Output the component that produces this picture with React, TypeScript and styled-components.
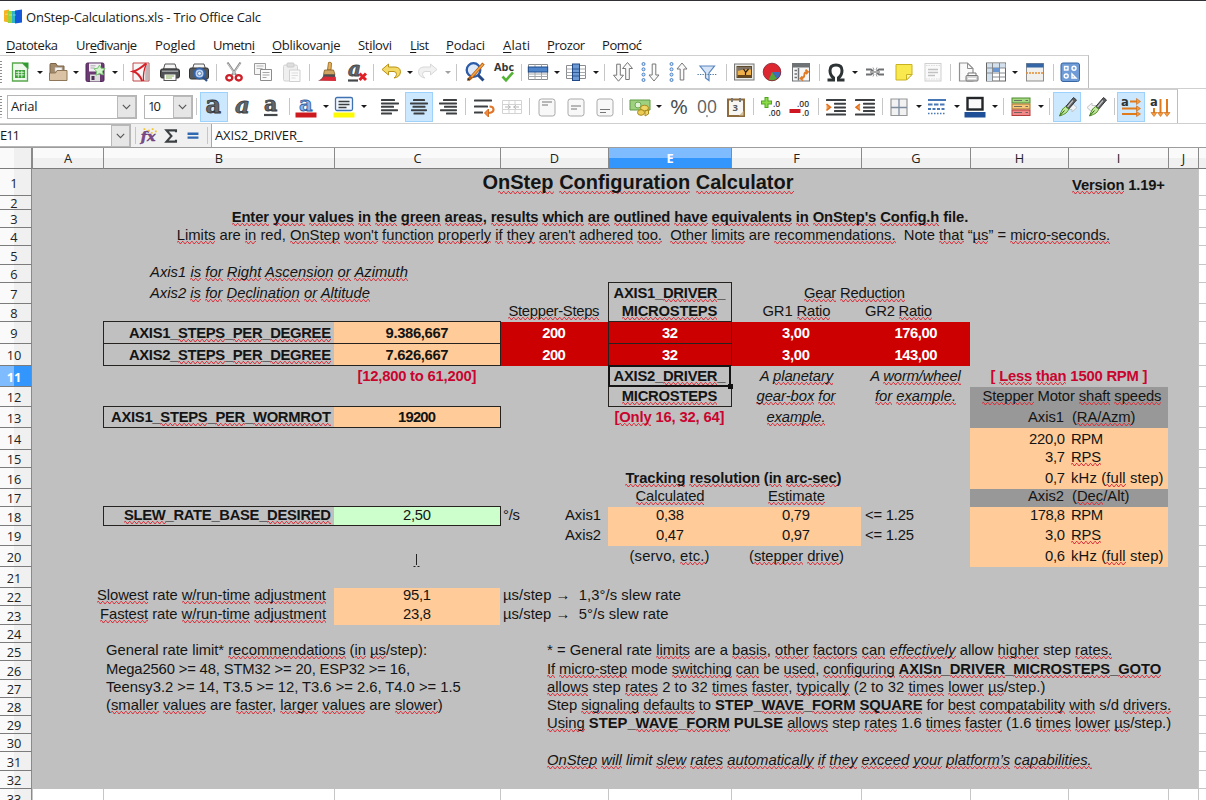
import React from "react";
import styled, { createGlobalStyle, css } from "styled-components";

const UI = '"Open Sans", "Noto Sans", sans-serif';
const CELL = '"Liberation Sans", Arial, sans-serif';

const GlobalStyle = createGlobalStyle`
  * { box-sizing: border-box; }
  html, body { margin: 0; padding: 0; background: #fff; }
  body { width: 1206px; height: 800px; overflow: hidden; }
`;

type Run = { text: string; bold?: boolean; italic?: boolean; wavy?: boolean };

const parse = (source: string, bold: boolean, italic: boolean): Run[] => {
  const runs: Run[] = [];
  let b = bold;
  let i = italic;
  let wavy = false;
  source.split(/(\*\*|\/\/|\{|\})/).forEach((part) => {
    if (part === "**") b = !b;
    else if (part === "//") i = !i;
    else if (part === "{") wavy = true;
    else if (part === "}") wavy = false;
    else if (part) runs.push({ text: part, bold: b, italic: i, wavy });
  });
  return runs;
};

const ruler = document.createElement("canvas").getContext("2d")!;

const spacingFor = (runs: Run[], size: number, family: string, width: number) => {
  let total = 0;
  let count = 0;
  runs.forEach((r) => {
    ruler.font = `${r.italic ? "italic " : ""}${r.bold ? "bold " : ""}${size}px ${family}`;
    total += ruler.measureText(r.text).width;
    count += r.text.length;
  });
  return (width - total) / Math.max(1, count - 1);
};

const Line = styled.span<{ $size: number; $family: string; $spacing: number }>`
  flex: none;
  white-space: pre;
  font-family: ${(p) => p.$family};
  font-size: ${(p) => p.$size}px;
  line-height: 1.15;
  letter-spacing: ${(p) => p.$spacing.toFixed(3)}px;
  margin-right: ${(p) => (-p.$spacing).toFixed(3)}px;
`;

const Piece = styled.span<{ $bold?: boolean; $italic?: boolean; $wavy?: boolean }>`
  font-weight: ${(p) => (p.$bold ? 700 : 400)};
  font-style: ${(p) => (p.$italic ? "italic" : "normal")};
  ${(p) =>
    p.$wavy &&
    css`
      padding-bottom: 1px;
      background-image: linear-gradient(45deg, transparent 40%, #dc2f3a 42%, #dc2f3a 60%, transparent 62%),
        linear-gradient(-45deg, transparent 40%, #dc2f3a 42%, #dc2f3a 60%, transparent 62%);
      background-position: 0 100%, 2.3px 100%;
      background-repeat: repeat-x;
      background-size: 4.6px 3px;
    `}
`;

const Underlined = styled.span`
  text-decoration: underline;
  text-underline-offset: 2px;
  text-decoration-thickness: 1px;
`;

type FitProps = { text: string; width: number; size?: number; family?: string; bold?: boolean; italic?: boolean };

const Fit = ({ text, width, size = 14.8, family = CELL, bold = false, italic = false }: FitProps) => {
  const runs = parse(text, bold, italic);
  return (
    <Line $size={size} $family={family} $spacing={spacingFor(runs, size, family, width)}>
      {runs.map((r, n) => (
        <Piece key={n} $bold={r.bold} $italic={r.italic} $wavy={r.wavy}>
          {r.text}
        </Piece>
      ))}
    </Line>
  );
};

/* ---------- window chrome ---------- */

const Window = styled.div`
  width: 1206px;
  height: 800px;
  overflow: hidden;
  display: flex;
  flex-direction: column;
  background: #fff;
  color: #1a1a1a;
  border-top: 1px solid #303036;
`;

const TitleBar = styled.header`
  height: 33px;
  flex: none;
  display: flex;
  align-items: center;
  gap: 4px;
  padding: 0 0 1px 4px;
`;

const MenuBar = styled.nav`
  height: 21px;
  flex: none;
  display: flex;
  align-items: center;
  padding: 1px 0 0 6px;
`;

const MenuItem = styled.span<{ $gap: number }>`
  margin-left: ${(p) => p.$gap}px;
  font-family: ${UI};
  display: flex;
`;

const Toolbar = styled.div<{ $height: number; $width: number }>`
  flex: none;
  height: ${(p) => p.$height}px;
  width: ${(p) => p.$width}px;
  display: flex;
  align-items: center;
  border-top: 1px solid #cfcfcf;
  border-right: 1px solid #bdbdbd;
`;

const ToolbarRow = styled.div`
  flex: none;
  display: flex;
  border-bottom: 1px solid #cfcfcf;
  width: 100%;
`;

const Grip = styled.span`
  flex: none;
  width: 3px;
  height: 22px;
  background: repeating-linear-gradient(#8f8f8f 0 1px, transparent 1px 3px);
  clip-path: inset(0 1px 0 0);
`;

const Separator = styled.span<{ $gap: number }>`
  flex: none;
  width: 1px;
  height: 17px;
  margin-left: ${(p) => p.$gap}px;
  background: #c6c6c6;
`;

const ToolButton = styled.span<{ $gap: number; $width: number; $active?: boolean }>`
  flex: none;
  margin-left: ${(p) => p.$gap}px;
  width: ${(p) => p.$width}px;
  height: 30px;
  display: flex;
  align-items: center;
  justify-content: center;
  ${(p) =>
    p.$active &&
    css`
      background: #cce8ff;
      border: 1px solid #9fd2fb;
    `}
`;

const DropMark = styled.span<{ $gap: number; $faded?: boolean }>`
  flex: none;
  margin-left: ${(p) => p.$gap}px;
  border: 3px solid transparent;
  border-top: 3.5px solid ${(p) => (p.$faded ? "#a0a0a0" : "#1a1a1a")};
  border-bottom: 0;
`;

const Combo = styled.span<{ $width: number; $gap: number }>`
  flex: none;
  width: ${(p) => p.$width}px;
  height: 24px;
  margin-left: ${(p) => p.$gap}px;
  display: flex;
  align-items: center;
  justify-content: space-between;
  padding-left: 3px;
  background: #fff;
  border: 1px solid #b5b5b5;
`;

const ComboButton = styled.span`
  width: 19px;
  height: 22px;
  flex: none;
  display: flex;
  align-items: center;
  justify-content: center;
  background: #e6e6e6;
  border: 1px solid #b9b9b9;
`;

const Chevron = () => (
  <ComboButton>
    <svg width="9" height="6" viewBox="0 0 9 6">
      <path d="M.8 .8 4.5 4.6 8.2 .8" fill="none" stroke="#555" strokeWidth="1.1" />
    </svg>
  </ComboButton>
);

/* ---------- icons, all drawn on a 22 unit square ---------- */

const bars = (rows: number[][], color = "#3c4043") =>
  rows.map(([x, y, w]) => <rect key={y} x={x} y={y} width={w} height="2" rx=".6" fill={color} />);

const pageBox = (y: number) => (
  <>
    <rect x="3" y="3" width="16" height="17" rx="2.4" fill="#f8f8f8" stroke="#a9a9a9" />
    <path d={`M6 ${y}h10M6 ${y + 3}h6`} stroke="#777" strokeWidth="1.1" />
  </>
);

const letter = (x: number, y: number, size: number, fill: string, stroke: string, style = "normal") => (
  <text x={x} y={y} fontFamily="DejaVu Serif, serif" fontStyle={style} fontWeight="700" fontSize={size} fill={fill} stroke={stroke} strokeWidth=".8">
    a
  </text>
);

const hollowArrow = "M-1.8 -8v11h-3.2l5 6 5-6h-3.2v-11z";

const pen = (
  <>
    <path d="M17.500 1.500 9.800 10.500l3 2.500L20.500 4z" fill="#5a5e61" stroke="#2b2b2b" strokeWidth=".9" />
    <path d="m17 4.500-5.500 6.500" stroke="#c4c4c4" strokeWidth="1.200" />
    <path d="M9.600 10.600C6.500 12 5.200 15.500 3.500 20c4-1.500 7.500-2.500 9.200-6.800z" fill="#c0e89b" stroke="#4f8f22" />
    <path d="m4 19.500 4.500-5" stroke="#2f5c12" />
  </>
);

const icons: Record<string, React.ReactNode> = {
  newSheet: (
    <>
      <path d="M3.500 2h10l5 5v13h-15z" fill="#eef8ec" stroke="#5aa84f" strokeWidth="1.300" />
      <path d="M13 1.500h6.500V8z" fill="#2f9a33" />
      <rect x="6" y="9" width="10" height="8" fill="#3fa33b" />
      <path d="M6.800 11.300h8.400M6.800 13.800h8.400M9.300 9.700v6.800M12.800 9.700v6.800" stroke="#e3f6df" strokeWidth=".9" />
    </>
  ),
  open: (
    <>
      <path d="M3 19V3.500Q3 2.500 4 2.500h5l1.500 2.500H17v5" fill="#a38a6b" stroke="#7a6348" />
      <path d="M8 6.500h7v4H8z" fill="#f6f6f6" stroke="#bbb" strokeWidth=".7" />
      <path d="M2.500 19.500V12h6l1.500-2.500H20v10z" fill="#d9c3a4" stroke="#8f7656" />
    </>
  ),
  save: (
    <>
      <rect x="2" y="2" width="18" height="18.500" rx="1.500" fill="#6b3a73" stroke="#4d2556" />
      <rect x="5" y="2.500" width="12" height="8" fill="#f2eef3" />
      <path d="M6.500 4.800h5M6.500 7h4" stroke="#aaa" />
      <rect x="6" y="13.500" width="10" height="7" fill="#ddd" />
      <rect x="7.500" y="15" width="3" height="4" fill="#51305a" />
      <path d="m15.500 4 1.600 3.200 3.900.3-2.600 2.800 1 3.700-3.900-1.600-3.400 1.800.6-3.900-2.800-2.500 3.900-.6z" fill="#d5f4cd" stroke="#6fc06a" strokeWidth=".9" />
    </>
  ),
  pdf: (
    <>
      <path d="M3 2h16v18H3z" fill="#f6f6f6" stroke="#c04848" />
      <path d="M18.500 2v17.500h-3.300V6z" fill="#b9b9b9" />
      <path d="M16 2.500C11 7 8 9 3.200 10.500c4 1 7 4.500 9 9.500" fill="none" stroke="#d5222a" strokeWidth="2" />
      <path d="M16.500 2.500C14 8 13 14 13.500 20" fill="none" stroke="#d5222a" strokeWidth="1.300" />
    </>
  ),
  print: (
    <>
      <path d="M6 3h10l1.500 5h-13z" fill="#f4f4f4" stroke="#555" />
      <rect x="1.500" y="8" width="19" height="9" rx="1.800" fill="#4d5052" stroke="#333" />
      <rect x="3" y="9.500" width="16" height="1.500" fill="#9a9da0" />
      <rect x="5" y="13" width="12" height="6.500" fill="#fbfbfb" stroke="#555" />
      <path d="M7 15h8M7 17h6" stroke="#8eb35e" />
    </>
  ),
  preview: (
    <>
      <path d="M6 3h10l1.500 5h-13z" fill="#f4f4f4" stroke="#555" />
      <rect x="1.500" y="7" width="19" height="11" rx="1.800" fill="#55585b" stroke="#333" />
      <circle cx="11.500" cy="12.500" r="5" fill="#bcd0ec" stroke="#3264ad" strokeWidth="2" />
      <circle cx="11.500" cy="12.500" r="2" fill="#e6eefa" stroke="#5e86c2" />
      <path d="m15 16 4 4" stroke="#2d4f8a" strokeWidth="2.200" />
    </>
  ),
  cut: (
    <>
      <path d="M4.500 1.500 13 14M17.500 1.500 9 14" stroke="#8b8b8b" strokeWidth="2.200" />
      <path d="M4.800 2.500 12 13M17.200 2.500 10 13" stroke="#e0e0e0" strokeWidth=".8" />
      <ellipse cx="6.300" cy="16.800" rx="3" ry="2.700" stroke="#cc2128" strokeWidth="2.400" />
      <ellipse cx="15.700" cy="16.800" rx="3" ry="2.700" stroke="#cc2128" strokeWidth="2.400" />
    </>
  ),
  copy: (
    <>
      <path d="M2.500 2.500h11v11h-11z" fill="#f6f6f6" stroke="#9b9b9b" />
      <path d="M4.500 5h7M4.500 7.500h6" stroke="#b5b5b5" />
      <path d="M8.500 8.500h11v11h-11z" fill="#fbfbfb" stroke="#8b8b8b" />
      <path d="M10.500 11.500h7M10.500 14h7M10.500 16.500h4" stroke="#a5a5a5" />
    </>
  ),
  paste: (
    <>
      <rect x="2.500" y="4" width="14" height="16" rx="1.500" fill="#efefef" stroke="#d2d2d2" />
      <rect x="6" y="2" width="7" height="4" rx="1" fill="#ddd" stroke="#cacaca" />
      <path d="M8.500 9h10.500v11.500H8.500z" fill="#fafafa" stroke="#d0d0d0" />
      <path d="M10.500 12h6.500M10.500 14.500h6.500M10.500 17h4" stroke="#dcdcdc" />
    </>
  ),
  brush: (
    <>
      <path d="M12.500 1.500q1.700-.8 3 .5l-.5 7h-3.500z" fill="#e6b25c" stroke="#9a6b21" strokeWidth=".9" />
      <path d="M8.500 9h9l1.500 4.500H7.500z" fill="#cfa463" stroke="#86602a" strokeWidth=".8" />
      <path d="M7.500 13.500H19l.8 6H2c3-.8 4.800-2.500 5.500-6z" fill="#4b4f53" />
      <path d="M2 19.600c3-.6 4.500-2 5.600-4.200l12 .6.400 4z" fill="#dc2b38" />
    </>
  ),
  clear: (
    <>
      {letter(2, 15, 20, "#63676a", "#44484b", "italic")}
      <path d="M2 19.500h10" stroke="#44484b" strokeWidth="2.200" />
      <path d="m13.500 12.500 6.500 6.500M20 12.500 13.500 19" stroke="#e02026" strokeWidth="3" />
    </>
  ),
  undo: (
    <path d="M8.500 3 2 8.500 8.500 14v-3.500h5.500q2.700.3 2.500 3-.2 2-2.500 3.500 6-.8 6.500-6.200-.3-4.600-5.500-4.800H8.500z" fill="#f3d968" stroke="#b99113" />
  ),
  redo: (
    <path d="M13.500 3 20 8.500 13.500 14v-3.500H8q-2.700.3-2.500 3 .2 2 2.500 3.500-6-.8-6.500-6.200.3-4.600 5.500-4.800h6.500z" fill="#f1f1f1" stroke="#d8d8d8" />
  ),
  find: (
    <>
      <circle cx="9.500" cy="9" r="6.800" fill="#dfe9f8" stroke="#2c5ba8" strokeWidth="2.300" />
      <path d="m14 14 5.500 5.500" stroke="#274a86" strokeWidth="3" />
      <path d="M19.500 2.500 7 16.500l-3 2.500" stroke="#b85f12" strokeWidth="3.300" />
      <path d="M19 3.200 7.500 15.800" stroke="#f4a545" strokeWidth="1.700" />
      <path d="m2.800 19.800 3-1-1.500-1.600z" fill="#222" />
    </>
  ),
  spell: (
    <>
      <text x="1" y="9.500" textLength="20" lengthAdjust="spacingAndGlyphs" fontFamily="Open Sans, sans-serif" fontWeight="700" fontSize="10.5" fill="#33373a">
        Abc
      </text>
      <path d="m9.500 15.500 3.500 3.800 7-8" stroke="#54b435" strokeWidth="2.600" />
    </>
  ),
  rows: (
    <>
      <path d="M1.500 3.500h19v15h-19z" fill="#fff" stroke="#8a8d90" />
      <path d="M8 3.500v15M14.500 3.500v15M1.500 15.500h19" stroke="#a5a8ab" />
      <rect x="1.300" y="6" width="19.400" height="5" fill="#4f86cb" stroke="#204a87" />
      <path d="M1.500 13h19" stroke="#a5a8ab" />
    </>
  ),
  cols: (
    <>
      <path d="M1.500 4.500h19v13h-19z" fill="#fff" stroke="#8a8d90" />
      <path d="M1.500 8h19M1.500 11.500h19M1.500 14.500h19" stroke="#a5a8ab" />
      <rect x="7.500" y="3" width="7" height="16.500" fill="#6c9ad4" stroke="#204a87" />
      <path d="M7.500 8h7M7.500 11.500h7M7.500 15h7" stroke="#204a87" strokeWidth=".8" />
    </>
  ),
  sort: (
    <>
      <path d={hollowArrow} transform="translate(6.500 11.200)" fill="#fafafa" stroke="#777" />
      <path d={hollowArrow} transform="translate(15.500 10.500) rotate(180)" fill="#fafafa" stroke="#777" />
    </>
  ),
  sortDown: (
    <>
      {[3, 8.300, 13.600, 19].map((y) => (
        <circle key={y} cx="3.500" cy={y} r="1.500" fill="#d8e6f8" stroke="#3d75bd" strokeWidth=".9" />
      ))}
      <path d={hollowArrow} transform="translate(14 11)" fill="#fafafa" stroke="#777" />
    </>
  ),
  sortUp: (
    <>
      {[3, 8.300, 13.600, 19].map((y) => (
        <circle key={y} cx="3.500" cy={y} r="1.500" fill="#d8e6f8" stroke="#3d75bd" strokeWidth=".9" />
      ))}
      <path d={hollowArrow} transform="translate(14 11) rotate(180)" fill="#fafafa" stroke="#777" />
    </>
  ),
  filter: (
    <>
      <path d="M4 5h14.500l-5.500 7v7.500l-3.500-2.500V12z" fill="#d5e5f7" stroke="#5a86bd" strokeWidth="1.200" />
      <path d="M1.500 13.500h19" stroke="#48759f" strokeDasharray="1.300 1.200" />
    </>
  ),
  image: (
    <>
      <rect x="1.500" y="3" width="19.500" height="16" fill="#e9e9e6" stroke="#777" />
      <rect x="4" y="5.500" width="14.500" height="11" fill="#f0b04a" stroke="#5e4a2a" />
      <path d="M4.500 6h13.500v2.500q-6-1-13.500 1.500z" fill="#7d7263" />
      <path d="M12.500 16v-5l-2-3M12.500 11.500l3-3.500" stroke="#2c1f10" strokeWidth="1.200" />
      <path d="M4.500 14h13.500v2H4.500z" fill="#6a4718" />
    </>
  ),
  chart: (
    <>
      <circle cx="11" cy="11" r="8.800" fill="#dd2731" />
      <path d="M11 11h8.800a8.800 8.800 0 0 1-3.800 7.200z" fill="#3e6fba" />
      <path d="m11 11 5.200 7.100a8.800 8.800 0 0 1-8.500 1z" fill="#57a639" />
      <circle cx="11" cy="11" r="8.800" stroke="#7d2030" strokeWidth=".8" />
    </>
  ),
  pivot: (
    <>
      <rect x="2.500" y="2.500" width="17" height="17.500" fill="#f6f6f6" stroke="#6f7275" />
      <path d="M3 3h16.500v3.500H3z" fill="#6f7275" />
      <path d="M4.500 9.500h2.500M4.500 13h2.500M4.500 16.500h2.500M8.500 7v12.500" stroke="#6f7275" strokeWidth="1.500" />
      <path d="M10.500 17.500q4-.3 3.800-3.700 0-2.800 3-3M12.500 15.500l-2 2 2.500 2M15.500 8.800l2.500 2-2 2.300" stroke="#e07a25" strokeWidth="1.800" />
    </>
  ),
  omega: (
    <path d="M2.500 19h6v-2.300C5.800 14.900 5 12.500 5 9.500 5 6 7 4 11 4s6 2 6 5.500c0 3-.8 5.400-3.500 7.200V19h6" stroke="#2e3436" strokeWidth="3" />
  ),
  link: (
    <>
      <path d="M2 8.500h5l3 2.500-3 2.500H2M20 8.500h-5L12 11l3 2.500h5" stroke="#6e7174" strokeWidth="1.800" />
      <path d="M6 11h10" stroke="#aaa" strokeWidth="2" />
      <path d="M9 6.500l1 2.500M13 6.500l-1 2.500M9 15.500l1-2.500M13 15.500l-1-2.500" stroke="#999" />
    </>
  ),
  note: (
    <>
      <path d="M3 3.500h16v10l-5.500 5.500H3z" fill="#f9e94e" stroke="#c9b21f" />
      <path d="M13.500 19v-5.500H19z" fill="#fdf7ae" stroke="#c9b21f" />
    </>
  ),
  page: (
    <>
      <rect x="3" y="2.500" width="16" height="17.500" fill="#fafafa" stroke="#cfcfcf" />
      <path d="M4 4.500h14M4 18h14" stroke="#dcdcdc" strokeDasharray="1.500 1" />
      <path d="M6 8.500h10M6 11.500h10M6 14.500h7" stroke="#c2c2c2" strokeWidth="1.400" />
    </>
  ),
  printArea: (
    <>
      <path d="M2.500 2h8l5.500 5.500V20H2.500z" fill="#fafafa" stroke="#8f8f8f" strokeWidth="1.200" />
      <path d="M10.500 2v5.500H16" stroke="#8f8f8f" />
      <path d="M11 12h8v3h-8z" fill="#fff" stroke="#777" />
      <rect x="9" y="14.500" width="12" height="5.500" rx="1" fill="#d3d3d3" stroke="#777" />
      <path d="M11 17.500h8" stroke="#fff" strokeWidth="1.300" />
    </>
  ),
  freeze: (
    <>
      <rect x="1.500" y="2" width="19" height="18" fill="#fff" stroke="#666" />
      <path d="M2 2.500h18.500V7H7.500v13H2z" fill="#d3e0ee" />
      <path d="M7.500 2v18M14.500 2v18M1.500 7h19M1.500 12h19M7.500 16h13" stroke="#7d8083" strokeWidth=".9" />
      <rect x="8" y="7" width="6" height="4" fill="#6796d2" />
    </>
  ),
  split: (
    <>
      <rect x="2.500" y="2.500" width="17" height="17.500" fill="#f0f0ee" stroke="#8d8d8d" />
      <rect x="2.500" y="2.500" width="17" height="4" fill="#3465a4" />
      <path d="M2 12h18" stroke="#e58a2d" strokeWidth="1.300" strokeDasharray="2 1" />
    </>
  ),
  draw: (
    <>
      <rect x="2" y="2" width="18.500" height="18.500" rx="2" fill="#6f9bd6" stroke="#3465a4" />
      <g fill="#7fa7de" stroke="#fff" strokeWidth="1.400">
        <rect x="5.500" y="5.500" width="3.500" height="3.500" />
        <circle cx="15" cy="7.300" r="2" />
        <circle cx="7.200" cy="15" r="2" />
        <path d="M13 13v4h4z" />
      </g>
    </>
  ),
  bold: <>{letter(2.500, 17, 24, "#63676a", "#2e3436")}</>,
  italic: <>{letter(3, 17, 23, "#63676a", "#3c4043", "italic")}</>,
  underline: (
    <>
      {letter(4, 15, 20.500, "#63676a", "#3c4043")}
      <path d="M4 19h13.500" stroke="#44484b" strokeWidth="2.200" />
    </>
  ),
  fontColor: (
    <>
      {letter(4, 14.500, 21, "#8db4e6", "#2b5c9e")}
      <rect x=".5" y="16.500" width="21" height="5" fill="#cc1a1f" />
    </>
  ),
  highlight: (
    <>
      <rect x="2.500" y="1.500" width="17" height="13" rx="1.500" fill="#f2f7fd" stroke="#3f72b3" strokeWidth="1.300" />
      <path d="M5.500 5.500h11M5.500 8.500h11M5.500 11.500h8" stroke="#3b3f42" strokeWidth="1.500" />
      <rect x=".5" y="16.500" width="21" height="5" fill="#fdfb04" />
    </>
  ),
  alignLeft: <>{bars([[2, 3, 14], [2, 6.400, 18], [2, 9.800, 13], [2, 13.200, 17], [2, 16.600, 11]])}</>,
  alignCenter: <>{bars([[5, 3, 12], [2, 6.400, 18], [4.500, 9.800, 13], [3, 13.200, 16], [5.500, 16.600, 11]])}</>,
  alignRight: <>{bars([[6, 3, 14], [2, 6.400, 18], [7, 9.800, 13], [3, 13.200, 17], [9, 16.600, 11]])}</>,
  wrap: (
    <>
      {bars([[1, 3.500, 18], [1, 9.500, 14], [1, 15.500, 9]])}
      <path d="M16.500 10.500q4 0 4 3.200 0 3-5.500 3.300" stroke="#e0752a" strokeWidth="2.200" />
      <path d="m15.500 13-4 4 4 4z" fill="#f08a3c" stroke="#d56a1c" />
    </>
  ),
  merge: (
    <>
      <path d="M1.500 4.500h19v13h-19zM1.500 8.500h19M1.500 13.500h19M8 4.500v4M14 4.500v4M8 13.500v4M14 13.500v4" stroke="#d3d3d3" />
      <path d="M4 11h5M18 11h-5M7 9.300 9.500 11 7 12.700M15 9.300 12.500 11l2.500 1.700" stroke="#b5b5b5" />
    </>
  ),
  alignTop: pageBox(6),
  alignMiddle: pageBox(10),
  alignBottom: pageBox(13.500),
  currency: (
    <>
      <path d="M1 4h20v10H1z" fill="#9fd07f" stroke="#5f9a45" />
      <circle cx="9" cy="9" r="3" fill="#e0f2d4" stroke="#6ba850" />
      <ellipse cx="15.500" cy="12" rx="4" ry="2.800" fill="#f0d567" stroke="#a98b1d" />
      <ellipse cx="12" cy="16.500" rx="3.500" ry="2.800" fill="#eccb52" stroke="#a98b1d" />
      <path d="M16 15v5l3.500-2v-4z" stroke="#a98b1d" fill="#f0d567" />
    </>
  ),
  percent: (
    <text x="2" y="17.500" fontFamily="Open Sans, sans-serif" fontSize="20" textLength="18" lengthAdjust="spacingAndGlyphs" fill="#4a4d50">
      %
    </text>
  ),
  number: (
    <>
      <text x="1" y="16.500" fontFamily="Open Sans, sans-serif" fontSize="19" textLength="20" lengthAdjust="spacingAndGlyphs" fill="#5e6164">
        00
      </text>
      <path d="M10 19.500h2l-1 2z" fill="#4a4d50" />
    </>
  ),
  date: (
    <>
      <path d="M3 3.500h16v16.500H3z" fill="#f7f6f2" stroke="#8e6b3d" strokeWidth="2" />
      <path d="M7 2v4M15 2v4" stroke="#777" strokeWidth="2" />
      <text x="7.500" y="15" fontFamily="Open Sans, sans-serif" fontWeight="700" fontSize="9.5" fill="#55585b">
        3
      </text>
      <path d="M14 19.500 18.500 15v4.500z" fill="#d6c39f" />
    </>
  ),
  addDecimal: (
    <>
      <path d="M6.500 1v11M1 6.500h11" stroke="#4ea51f" strokeWidth="4" />
      <path d="M6.500 2v9M2 6.500h9" stroke="#8bdb4b" strokeWidth="2" />
      <g fontFamily="Open Sans, sans-serif" fontWeight="600" fontSize="8.5" fill="#333">
        <text x="13" y="11">.0</text>
        <text x="8.500" y="20">.00</text>
      </g>
    </>
  ),
  removeDecimal: (
    <>
      <rect x=".5" y="13" width="11" height="4" fill="#cf1723" />
      <g fontFamily="Open Sans, sans-serif" fontWeight="600" fontSize="8.5" fill="#333">
        <text x="8" y="11">.00</text>
        <text x="13" y="20">.0</text>
      </g>
    </>
  ),
  indent: (
    <>
      {bars([[1, 3, 20], [9, 6.700, 12], [9, 10.400, 12], [9, 14.100, 12], [1, 17.500, 20]])}
      <path d="m1.500 8 4 3.200-4 3.300" fill="#f59a4e" stroke="#e0701d" strokeWidth="1.600" />
    </>
  ),
  outdent: (
    <>
      {bars([[1, 3, 20], [9, 6.700, 12], [9, 10.400, 12], [9, 14.100, 12], [1, 17.500, 20]])}
      <path d="M6 8l-4 3.200 4 3.300" fill="#f59a4e" stroke="#e0701d" strokeWidth="1.600" />
    </>
  ),
  borders: (
    <>
      <path d="M3 3h16v16.500H3z" fill="#f2f2f2" stroke="#979797" strokeWidth="1.200" />
      <path d="M11 3v16.500M3 11.500h16" stroke="#7e8ca0" strokeWidth="1.300" />
    </>
  ),
  lineStyle: (
    <>
      <path d="M2 4h18" stroke="#4877b5" strokeWidth="2" />
      <path d="M2 8.500h18" stroke="#4877b5" strokeWidth="2" strokeDasharray="4.500 1.500" />
      <path d="M2 13h18" stroke="#4877b5" strokeWidth="2" strokeDasharray="3 1.500" />
      <path d="M2 17.500h18" stroke="#4877b5" strokeWidth="1.700" strokeDasharray="1.500 1.500" />
    </>
  ),
  borderColor: (
    <>
      <rect x="3.500" y="2" width="15" height="11.500" fill="#fafafa" stroke="#222629" strokeWidth="2.400" />
      <rect x=".5" y="16" width="21" height="5.500" fill="#1f4f96" />
    </>
  ),
  conditional: (
    <>
      <rect x="2" y="2" width="18" height="5" fill="#a6da82" stroke="#4e8a32" />
      <rect x="2" y="8" width="18" height="5" fill="#f7c97c" stroke="#a8742a" />
      <rect x="2" y="14" width="18" height="5.500" fill="#f08a8a" stroke="#b53a3a" />
      <path d="M4 4.500h8M4 10.500h8M4 16.500h8M15.500 4.500h2.500M15.500 10.500h2.500M15.500 16.500h2.500" stroke="#555" strokeWidth=".8" />
    </>
  ),
  penRight: (
    <>
      <path d="M10 9.500h6V7l5 4.500-5 4.500v-2.500h-6z" fill="#f0f4f7" stroke="#bcc5cc" />
      {pen}
    </>
  ),
  penLeft: (
    <>
      <path d="M12 9.500H6V7l-5 4.500L6 16v-2.500h6z" fill="#f6f6f6" stroke="#c4c4c4" />
      {pen}
    </>
  ),
  textAcross: (
    <>
      <text x="1" y="9.500" fontFamily="DejaVu Sans, sans-serif" fontWeight="700" fontSize="11.5" fill="#2e3436">
        a
      </text>
      <path d="M10 5.500h8M2 12.500h16M2 18h16" stroke="#e07a1a" strokeWidth="2" />
      <path d="m16.500 2.500 4 3-4 3zM16.500 9.800l4 2.700-4 2.700zM16.500 15.500l4 2.500-4 2.500z" fill="#f39a3c" stroke="#c96512" strokeWidth=".6" />
    </>
  ),
  textDown: (
    <>
      <text x="1" y="9.500" fontFamily="DejaVu Sans, sans-serif" fontWeight="700" fontSize="11.5" fill="#2e3436">
        a
      </text>
      <path d="M5 12v6M11.500 3v15M18 3v15" stroke="#e07a1a" strokeWidth="2" />
      <path d="m2 16.500 3 4 3-4zM8.500 16.500l3 4 3-4zM15 16.500l3 4 3-4z" fill="#f39a3c" stroke="#c96512" strokeWidth=".6" />
    </>
  ),
  fx: (
    <>
      <text x="2" y="16.500" fontFamily="DejaVu Serif, serif" fontStyle="italic" fontWeight="700" fontSize="14.5" textLength="16" lengthAdjust="spacingAndGlyphs" fill="#7a4a86" stroke="#6a3a76" strokeWidth=".5">
        fx
      </text>
      <path d="M5 3.500h2M10 5h2M14 3.500h2M17.500 6h2M13 7.500h2" stroke="#f2c530" strokeWidth="2" />
    </>
  ),
  sigma: <path d="M16.500 7V4.800H6l5.500 6.200L6 17.200h10.500V15" stroke="#3c4043" strokeWidth="2.300" />,
  equals: <path d="M5 8.500h12M5 12.800h12" stroke="#2f67b0" strokeWidth="2.700" />,
};

const IconBox = styled.svg`
  overflow: visible;
`;

const Glyph = ({ name, size = 22 }: { name: string; size?: number }) => (
  <IconBox width={size} height={size} viewBox="0 0 22 22" fill="none">
    {icons[name]}
  </IconBox>
);

type Tool = [string, number, boolean?];

const standardTools: Tool[] = [
  ["newSheet", 6], ["drop", 5.5], ["open", 4], ["drop", 4.5], ["save", 5], ["drop", 5.5], ["|", 5],
  ["pdf", 6.5], ["print", 7], ["preview", 6.5], ["|", 6],
  ["cut", 6.5], ["copy", 6.5], ["paste", 7.5], ["|", 6],
  ["brush", 6], ["clear", 8], ["|", 4.5],
  ["undo", 6], ["drop", 5.5], ["redo", 4], ["drop", 6, true], ["|", 5],
  ["find", 7], ["spell", 6.5], ["|", 6],
  ["rows", 5.5], ["drop", 5], ["cols", 5], ["drop", 5.5], ["|", 5.5],
  ["sort", 6.5], ["sortDown", 6], ["sortUp", 6.5], ["filter", 6], ["|", 7.5],
  ["image", 6], ["chart", 6.5], ["pivot", 7], ["|", 6.5],
  ["omega", 5.5], ["drop", 5], ["link", 6], ["note", 6.5], ["page", 7], ["|", 6],
  ["printArea", 6.5], ["freeze", 6], ["drop", 5], ["split", 6], ["|", 6.5], ["draw", 5.5],
];

const formatTools: Tool[] = [
  ["|", 3], ["bold", 3, true], ["italic", 1], ["underline", 0], ["|", 4],
  ["fontColor", 2], ["drop", 2.5], ["highlight", 1.5], ["drop", 2.5],
  ["alignLeft", 9.5], ["alignCenter", 1, true], ["alignRight", 1], ["|", 3],
  ["wrap", 3.5], ["merge", 0.5], ["|", 3],
  ["alignTop", 3], ["alignMiddle", 1], ["alignBottom", 1], ["|", 3],
  ["currency", 2.5], ["drop", 2.5], ["percent", 3], ["number", 0], ["date", 1], ["|", 3],
  ["addDecimal", 3], ["removeDecimal", 1], ["|", 3.5],
  ["indent", 3.5], ["outdent", 1], ["|", 3],
  ["borders", 2], ["drop", 2.5], ["lineStyle", 1.5], ["drop", 3], ["borderColor", 1], ["drop", 3], ["|", 5],
  ["conditional", 3], ["drop", 2.5], ["|", 5],
  ["penRight", 3.5, true], ["penLeft", 1.5], ["|", 3],
  ["textAcross", 2.5, true], ["textDown", 1],
];

const Tools = ({ items, slot }: { items: Tool[]; slot: number }) => (
  <>
    {items.map(([name, gap, flag], n) => {
      if (name === "|") return <Separator key={n} $gap={gap} />;
      if (name === "drop") return <DropMark key={n} $gap={gap} $faded={flag} />;
      return (
        <ToolButton key={n} $gap={gap} $width={slot} $active={flag}>
          <Glyph name={name} />
        </ToolButton>
      );
    })}
  </>
);

const menu: [string, number, number, number][] = [
  ["Datoteka", 0, 52, 0], ["Uređivanje", 2, 61, 18], ["Pogled", 2, 40.5, 18], ["Umetni", 5, 42, 17.5],
  ["Oblikovanje", 0, 68.5, 17], ["Stilovi", 2, 34, 17.5], ["List", 0, 19, 18], ["Podaci", 0, 39, 17],
  ["Alati", 0, 27, 18], ["Prozor", 0, 38, 17], ["Pomoć", 2, 40, 17],
];

/* ---------- formula bar ---------- */

const FormulaBar = styled.div`
  flex: none;
  height: 24px;
  display: flex;
  align-items: center;
  background: #f0f0f0;
  border-bottom: 1px solid #9c9c9c;
`;

const NameBox = styled.div`
  width: 131px;
  height: 23px;
  display: flex;
  align-items: center;
  justify-content: space-between;
  background: #fff;
  border: 1px solid #b5b5b5;
  border-left: 0;
`;

const FormulaTools = styled.div`
  width: 80px;
  display: flex;
  align-items: center;
`;

const FormulaInput = styled.div`
  flex: 1;
  height: 23px;
  display: flex;
  align-items: center;
  padding-left: 3px;
  background: #fff;
  border-left: 1px solid #a8a8a8;
`;

/* ---------- sheet ---------- */

const columns: [string, number][] = [
  ["A", 71], ["B", 231], ["C", 166], ["D", 108], ["E", 123], ["F", 130],
  ["G", 109], ["H", 98], ["I", 100], ["J", 30], ["", 8],
];

const rowHeights = [
  27, 14, 18, 18, 19, 18, 21, 18, 22, 22, 21, 20, 21, 22, 18, 21, 18, 19, 20, 21, 21, 18, 19, 18, 18, 19, 18, 18,
  18, 18, 19, 18, 19,
];

const Sheet = styled.main`
  flex: none;
  display: grid;
  grid-template-columns: 32px ${columns.map((c) => `${c[1]}px`).join(" ")};
  grid-template-rows: 21px ${rowHeights.map((h) => `${h}px`).join(" ")};
`;

type Area = { $r: number; $c: number; $rows?: number; $cols?: number };

const area = css<Area>`
  grid-row: ${(p) => p.$r + 1} / span ${(p) => p.$rows ?? 1};
  grid-column: ${(p) => p.$c + 1} / span ${(p) => p.$cols ?? 1};
  min-width: 0;
  min-height: 0;
`;

const Header = styled.div<Area & { $selected?: boolean; $side?: boolean }>`
  ${area}
  display: flex;
  align-items: center;
  justify-content: center;
  padding-top: ${(p) => (p.$side ? 1 : 0)}px;
  padding-right: ${(p) => (p.$side ? 3 : 0)}px;
  font: ${(p) => (p.$selected ? 700 : 400)} 12.8px/12px ${UI};
  color: ${(p) => (p.$selected ? "#fff" : "#222")};
  border-${(p) => (p.$side ? "right" : "left")}: 1px solid #8a8a8a;
  border-bottom: 1px solid #7c7c7c;
  background: ${(p) =>
    p.$side
      ? p.$selected
        ? "linear-gradient(90deg, #7fbcff 0 14px, #3396fd 14px)"
        : "linear-gradient(90deg, #fafafa 0 14px, #f0f0f0 14px)"
      : p.$selected
        ? "linear-gradient(#7fbcff 0 50%, #3396fd 50%)"
        : "linear-gradient(#fafafa 0 50%, #f0f0f0 50%)"};
`;

const Fill = styled.div<Area & { $color: string }>`
  ${area}
  background: ${(p) => p.$color};
`;

const GridCell = styled.div<Area>`
  ${area}
  border-left: 1px solid #c6c6c6;
  border-bottom: 1px solid #c6c6c6;
`;

const Frame = styled.div<Area>`
  ${area}
  margin: -1px -1px 0 0;
  border: 1px solid #26221f;
`;

const Cursor = styled.div<Area>`
  ${area}
  position: relative;
  margin: -1px 0 0 0;
  border: 2px solid #141414;
  &::after {
    content: "";
    position: absolute;
    right: -4px;
    bottom: -4px;
    width: 5px;
    height: 5px;
    background: #111;
  }
`;

const Caret = styled.div<Area>`
  ${area}
  display: flex;
  align-items: center;
  justify-content: center;
  padding-top: 9px;
`;

const CellText = styled.div<Area & { $align: string; $color: string; $left: number; $right: number; $up: number }>`
  ${area}
  display: flex;
  align-items: flex-end;
  justify-content: ${(p) => p.$align};
  color: ${(p) => p.$color};
  padding: 0 ${(p) => p.$right}px ${(p) => p.$up}px ${(p) => p.$left}px;
`;

type Entry = {
  r: number;
  c: number;
  cols?: number;
  a?: "l" | "c" | "r";
  w: number;
  t: string;
  b?: boolean;
  i?: boolean;
  color?: string;
  left?: number;
  right?: number;
  size?: number;
  up?: number;
};

const LIMIT = "#c9052f";
const WHITE = "#ffffff";

const entries: Entry[] = [
  { r: 1, c: 2, cols: 8, left: 5, w: 311, t: "O{nStep} {Configuration} {Calculator}", b: true, size: 20, up: 2 },
  { r: 1, c: 9, a: "l", left: 4, w: 93, t: "{Version} 1.19+", b: true, up: 2 },
  { r: 3, c: 1, cols: 9, w: 736.5, b: true, t: "{Enter} {your} {values} {in} {the} {green} {areas}, {results} {which} {are} {outlined} {have} {equivalents} {in} {OnStep's} {Config.h} file." },
  { r: 4, c: 1, cols: 10, left: 57, w: 933, t: "{Limits} are {in} red, {OnStep} {won't} {function} {properly} {if} {they} {aren't} {adhered} {too.}  {Other} {limits} are {recommendations.}  Note {that} “{µs}” = {micro-seconds.}" },
  { r: 6, c: 2, a: "l", left: 47, w: 259, i: true, t: "Axis1 {is} {for} {Right} {Ascension} {or} {Azimuth}" },
  { r: 7, c: 2, a: "l", left: 47, w: 220.5, i: true, t: "Axis2 {is} {for} {Declination} {or} {Altitude}" },
  { r: 7, c: 5, w: 112, b: true, t: "AXIS1_{DRIVER}_" },
  { r: 8, c: 5, w: 95.5, b: true, t: "{MICROSTEPS}" },
  { r: 7, c: 6, cols: 2, left: 8, w: 101, t: "{Gear} {Reduction}" },
  { r: 8, c: 4, w: 91, t: "{Stepper-Steps}" },
  { r: 8, c: 6, left: 1, w: 68, t: "GR1 {Ratio}" },
  { r: 8, c: 7, a: "l", left: 4, w: 67, t: "GR2 {Ratio}" },
  { r: 9, c: 2, a: "r", right: 3, w: 202, b: true, t: "AXIS1_{STEPS}_{PER}_{DEGREE}" },
  { r: 10, c: 2, a: "r", right: 3, w: 202, b: true, t: "AXIS2_{STEPS}_{PER}_{DEGREE}" },
  { r: 9, c: 3, w: 63, b: true, t: "9.386,667" },
  { r: 10, c: 3, w: 63, b: true, t: "7.626,667" },
  ...[9, 10].flatMap((r): Entry[] => [
    { r, c: 4, w: 23.5, b: true, color: WHITE, t: "200" },
    { r, c: 5, left: 1, w: 16, b: true, color: WHITE, t: "32" },
    { r, c: 6, w: 28, b: true, color: WHITE, t: "3,00" },
    { r, c: 7, left: 1, w: 43, b: true, color: WHITE, t: r === 9 ? "176,00" : "143,00" },
  ]),
  { r: 11, c: 3, w: 119, b: true, color: LIMIT, t: "[12,800 to 61,200]" },
  { r: 11, c: 5, w: 112, b: true, t: "AXIS2_{DRIVER}_" },
  { r: 12, c: 5, w: 95.5, b: true, t: "{MICROSTEPS}" },
  { r: 13, c: 5, w: 110, b: true, color: LIMIT, t: "[{Only} 16, 32, 64]" },
  { r: 11, c: 6, left: 1, w: 74, i: true, t: "A {planetary}" },
  { r: 12, c: 6, w: 79, i: true, t: "{gear-box} {for}" },
  { r: 13, c: 6, w: 59, i: true, t: "{example.}" },
  { r: 11, c: 7, w: 91, i: true, t: "A {worm/wheel}" },
  { r: 12, c: 7, w: 81, i: true, t: "{for} {example.}" },
  { r: 11, c: 8, cols: 2, w: 157, b: true, color: LIMIT, t: "[ {Less} {than} 1500 RPM ]" },
  { r: 12, c: 8, cols: 2, left: 6, w: 179, t: "{Stepper} Motor {shaft} {speeds}" },
  { r: 13, c: 8, a: "r", right: 4, w: 36, t: "Axis1" },
  { r: 13, c: 9, a: "l", left: 4, w: 63.5, t: "({RA/Azm})" },
  { r: 13, c: 2, a: "r", right: 3, w: 220, b: true, t: "AXIS1_{STEPS}_{PER}_{WORMROT}" },
  { r: 13, c: 3, w: 38, b: true, t: "19200" },
  { r: 14, c: 8, a: "r", right: 3, w: 36, t: "220,0" },
  { r: 15, c: 8, a: "r", right: 3, w: 20, t: "3,7" },
  { r: 16, c: 8, a: "r", right: 3, w: 20, t: "0,7" },
  { r: 17, c: 8, a: "r", right: 4, w: 36, t: "Axis2" },
  { r: 18, c: 8, a: "r", right: 3, w: 35, t: "178,8" },
  { r: 19, c: 8, a: "r", right: 3, w: 20, t: "3,0" },
  { r: 20, c: 8, a: "r", right: 3, w: 20, t: "0,6" },
  { r: 14, c: 9, a: "l", left: 3, w: 32, t: "RPM" },
  { r: 15, c: 9, a: "l", left: 3, w: 30, t: "{RPS}" },
  { r: 16, c: 9, a: "l", left: 3, w: 92.5, t: "kHz ({full} step)" },
  { r: 17, c: 9, a: "l", left: 4, w: 57.5, t: "({Dec}/Alt)" },
  { r: 18, c: 9, a: "l", left: 3, w: 32, t: "RPM" },
  { r: 19, c: 9, a: "l", left: 3, w: 30, t: "{RPS}" },
  { r: 20, c: 9, a: "l", left: 3, w: 92.5, t: "kHz ({full} step)" },
  { r: 16, c: 5, cols: 2, w: 216, b: true, right: 2, t: "{Tracking} {resolution} ({in} {arc-sec})" },
  { r: 17, c: 5, left: 1, w: 69, t: "{Calculated}" },
  { r: 17, c: 6, left: 1, w: 57, t: "{Estimate}" },
  { r: 18, c: 2, a: "r", right: 3, w: 207, b: true, t: "{SLEW}_RATE_BASE_{DESIRED}" },
  { r: 18, c: 3, w: 28, t: "2,50" },
  { r: 18, c: 4, a: "l", left: 3, w: 17, t: "°/s" },
  { r: 18, c: 4, a: "r", right: 7, w: 36, t: "Axis1" },
  { r: 19, c: 4, a: "r", right: 7, w: 36, t: "Axis2" },
  { r: 18, c: 5, left: 1, w: 28, t: "0,38" },
  { r: 19, c: 5, left: 1, w: 28, t: "0,47" },
  { r: 18, c: 6, w: 28, t: "0,79" },
  { r: 19, c: 6, w: 28, t: "0,97" },
  { r: 20, c: 5, w: 80, t: "(servo, {etc.})" },
  { r: 20, c: 6, left: 1, w: 95, t: "({stepper} {drive})" },
  { r: 18, c: 7, a: "l", left: 4, w: 49, t: "<= 1.25" },
  { r: 19, c: 7, a: "l", left: 4, w: 49, t: "<= 1.25" },
  { r: 22, c: 1, cols: 2, a: "r", right: 8, w: 229, t: "{Slowest} rate {w/run-time} {adjustment}" },
  { r: 23, c: 1, cols: 2, a: "r", right: 8, w: 226, t: "{Fastest} rate {w/run-time} {adjustment}" },
  { r: 22, c: 3, w: 28, t: "95,1" },
  { r: 23, c: 3, w: 28, t: "23,8" },
  { r: 22, c: 4, a: "l", left: 3, w: 178, t: "µs/step →  1,3°/s slew rate" },
  { r: 23, c: 4, a: "l", left: 3, w: 165.5, t: "µs/step →  5°/s slew rate" },
  { r: 25, c: 2, a: "l", left: 3, w: 321, t: "General rate limit* {recommendations} ({in} {µs}/step):" },
  { r: 26, c: 2, a: "l", left: 3, w: 304, t: "Mega2560 >= 48, STM32 >= 20, ESP32 >= 16," },
  { r: 27, c: 2, a: "l", left: 3, w: 355.5, t: "Teensy3.2 >= 14, T3.5 >= 12, T3.6 >= 2.6, T4.0 >= 1.5" },
  { r: 28, c: 2, a: "l", left: 3, w: 337.5, t: "({smaller} {values} are {faster}, {larger} {values} are {slower})" },
  { r: 25, c: 4, a: "l", left: 47, w: 565, t: "* = General rate {limits} are a {basis}, {other} {factors} {can} //{effectively}// allow {higher} step {rates.}" },
  { r: 26, c: 4, a: "l", left: 47, w: 614, t: "{If} {micro-step} mode {switching} {can} be {used}, {configuring} **{AXISn}_{DRIVER}_{MICROSTEPS}_{GOTO}**" },
  { r: 27, c: 4, a: "l", left: 47, w: 499, t: "{allows} step {rates} 2 to 32 {times} {faster}, {typically} (2 to 32 {times} {lower} {µs}/step.)" },
  { r: 28, c: 4, a: "l", left: 47, w: 624, t: "Step {signaling} {defaults} to **STEP_{WAVE}_{FORM} {SQUARE}** for {best} {compatability} {with} s/d {drivers.}" },
  { r: 29, c: 4, a: "l", left: 47, w: 624, t: "{Using} **STEP_{WAVE}_{FORM} PULSE** {allows} step {rates} 1.6 {times} {faster} (1.6 {times} {lower} {µs}/step.)" },
  { r: 31, c: 4, a: "l", left: 47, w: 544.5, i: true, t: "{OnStep} {will} limit {slew} {rates} {automatically} {if} {they} {exceed} {your} {platform’s} {capabilities.}" },
];

const PEACH = "#ffcc99";
const fills: [number, number, number, number, string][] = [
  [1, 1, 32, 10, "#c0c0c0"],
  [9, 3, 2, 1, PEACH],
  [9, 4, 2, 4, "#cc0000"],
  [13, 3, 1, 1, PEACH],
  [18, 3, 1, 1, "#ccffcc"],
  [18, 5, 2, 2, PEACH],
  [22, 3, 2, 1, PEACH],
  [12, 8, 2, 2, "#989898"],
  [14, 8, 3, 2, PEACH],
  [17, 8, 1, 2, "#989898"],
  [18, 8, 3, 2, PEACH],
];

const frames: [number, number, number, number][] = [
  [9, 2, 1, 2], [10, 2, 1, 2], [13, 2, 1, 2], [18, 2, 1, 2],
  [7, 5, 2, 1], [9, 5, 1, 1], [10, 5, 1, 1], [12, 5, 1, 1],
];

const flexAlign = { l: "flex-start", c: "center", r: "flex-end" };

export default function App() {
  return (
    <Window>
      <GlobalStyle />
      <TitleBar>
        <svg width="18" height="16" viewBox="0 0 18 16">
          <path d="M0 1.500 5 .5v13l-5-1z" fill="#f4b422" />
          <path d="M4 2h5v12H4z" fill="#9ad33c" />
          <path d="M8 2h5v12H8z" fill="#2fb4c8" />
          <path d="M11 1.500 18 .5v13l-7 1z" fill="#1459d9" />
          <path d="M1 5.500 4 5M5 6h3M9 6h3" stroke="#fff6" />
        </svg>
        <Fit text="OnStep-Calculations.xls - Trio Office Calc" width={235} size={13} family={UI} />
      </TitleBar>
      <MenuBar>
        {menu.map(([label, key, width, gap]) => {
          const size = 13;
          return (
            <MenuItem key={label} $gap={gap}>
              <Line $size={size} $family={UI} $spacing={spacingFor([{ text: label }], size, UI, width)}>
                {label.slice(0, key)}
                <Underlined>{label[key]}</Underlined>
                {label.slice(key + 1)}
              </Line>
            </MenuItem>
          );
        })}
      </MenuBar>
      <ToolbarRow>
        <Toolbar $height={33} $width={1089}>
          <Grip />
          <Tools items={standardTools} slot={22} />
        </Toolbar>
      </ToolbarRow>
      <ToolbarRow>
        <Toolbar $height={34} $width={1178}>
          <Grip />
          <Combo $gap={4} $width={130}>
            <Fit text="Arial" width={26.5} size={13} family={UI} />
            <Chevron />
          </Combo>
          <Combo $gap={7} $width={49}>
            <Fit text="10" width={13} size={13} family={UI} />
            <Chevron />
          </Combo>
          <Tools items={formatTools} slot={28} />
        </Toolbar>
      </ToolbarRow>
      <FormulaBar>
        <NameBox>
          <Fit text="E11" width={20} size={13} family={UI} />
          <Chevron />
        </NameBox>
        <FormulaTools>
          <Separator $gap={4} />
          <ToolButton $gap={2} $width={22}>
            <Glyph name="fx" size={20} />
          </ToolButton>
          <ToolButton $gap={0} $width={22}>
            <Glyph name="sigma" size={20} />
          </ToolButton>
          <ToolButton $gap={0} $width={22}>
            <Glyph name="equals" size={20} />
          </ToolButton>
          <Separator $gap={3} />
        </FormulaTools>
        <FormulaInput>
          <Fit text="AXIS2_DRIVER_" width={87.5} size={13} family={UI} />
        </FormulaInput>
      </FormulaBar>
      <Sheet>
        <Header $r={0} $c={0} $side />
        {columns.map(([name], n) => (
          <Header key={n} $r={0} $c={n + 1} $selected={name === "E"}>
            {name}
          </Header>
        ))}
        {rowHeights.map((_, n) => (
          <Header key={n} $r={n + 1} $c={0} $side $selected={n === 10}>
            {n + 1}
          </Header>
        ))}
        {rowHeights.map((_, n) => (
          <GridCell key={n} $r={n + 1} $c={11} />
        ))}
        {columns.slice(0, 10).map((_, n) => (
          <GridCell key={n} $r={33} $c={n + 1} />
        ))}
        {fills.map(([r, c, rows, cols, color], n) => (
          <Fill key={n} $r={r} $c={c} $rows={rows} $cols={cols} $color={color} />
        ))}
        {frames.map(([r, c, rows, cols], n) => (
          <Frame key={n} $r={r} $c={c} $rows={rows} $cols={cols} />
        ))}
        <Cursor $r={11} $c={5} />
        <Caret $r={20} $c={3}>
          <svg width="8" height="14" viewBox="0 0 8 14">
            <path d="M3.500 0v11" stroke="#222" />
            <path d="M.5 12.500h2M4.500 12.500h2" stroke="#222" />
          </svg>
        </Caret>
        {entries.map((e, n) => (
          <CellText
            key={n}
            $r={e.r}
            $c={e.c}
            $cols={e.cols}
            $align={flexAlign[e.a ?? "c"]}
            $color={e.color ?? "#141414"}
            $left={e.left ?? 0}
            $right={e.right ?? 0}
            $up={e.up ?? 2}
          >
            <Fit text={e.t} width={e.w} size={e.size} bold={e.b} italic={e.i} />
          </CellText>
        ))}
      </Sheet>
    </Window>
  );
}
